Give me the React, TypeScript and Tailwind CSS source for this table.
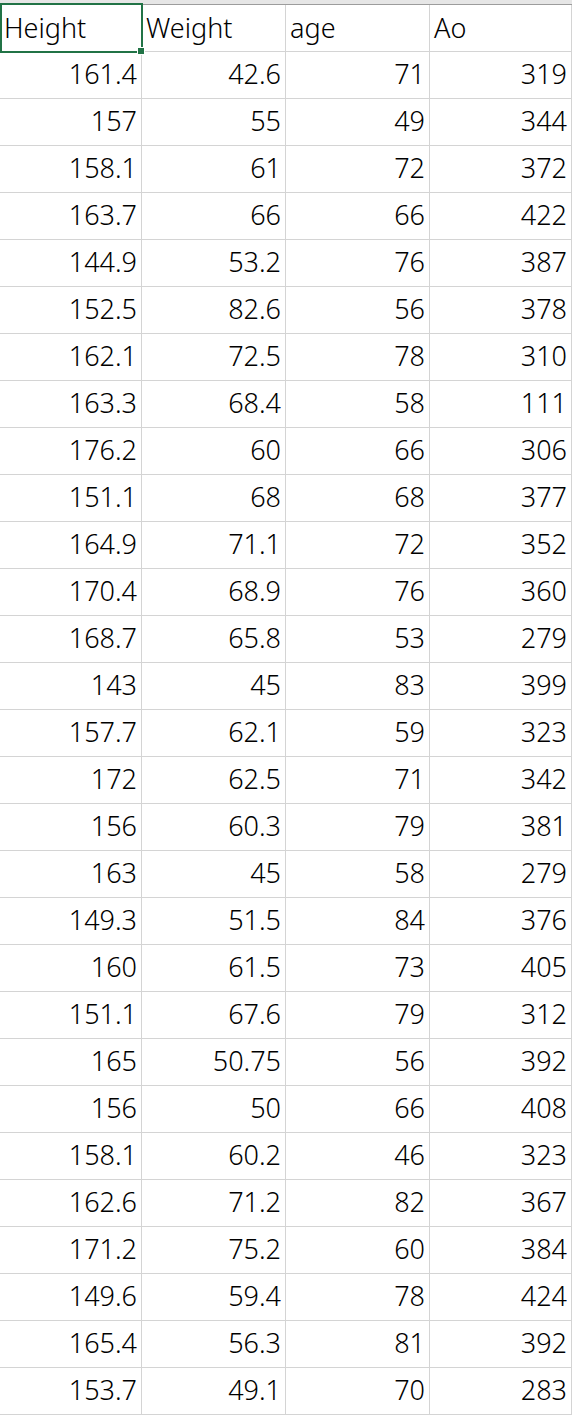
const rows: [string, string, string, string][] = [
  ["161.4", "42.6", "71", "319"],
  ["157", "55", "49", "344"],
  ["158.1", "61", "72", "372"],
  ["163.7", "66", "66", "422"],
  ["144.9", "53.2", "76", "387"],
  ["152.5", "82.6", "56", "378"],
  ["162.1", "72.5", "78", "310"],
  ["163.3", "68.4", "58", "111"],
  ["176.2", "60", "66", "306"],
  ["151.1", "68", "68", "377"],
  ["164.9", "71.1", "72", "352"],
  ["170.4", "68.9", "76", "360"],
  ["168.7", "65.8", "53", "279"],
  ["143", "45", "83", "399"],
  ["157.7", "62.1", "59", "323"],
  ["172", "62.5", "71", "342"],
  ["156", "60.3", "79", "381"],
  ["163", "45", "58", "279"],
  ["149.3", "51.5", "84", "376"],
  ["160", "61.5", "73", "405"],
  ["151.1", "67.6", "79", "312"],
  ["165", "50.75", "56", "392"],
  ["156", "50", "66", "408"],
  ["158.1", "60.2", "46", "323"],
  ["162.6", "71.2", "82", "367"],
  ["171.2", "75.2", "60", "384"],
  ["149.6", "59.4", "78", "424"],
  ["165.4", "56.3", "81", "392"],
  ["153.7", "49.1", "70", "283"],
];

const headers = ["Height", "Weight", "age", "Ao"];

const font = "font-['Noto_Sans','Noto_Sans_CJK_JP',sans-serif]";

export default function App() {
  return (
    <div className={`relative w-[572px] h-[1422px] overflow-hidden bg-white text-black font-light ${font}`}>
      <div className="h-[5px] bg-[#e6e6e6] border-b border-[#9c9c9c]" />
      <div className="grid grid-cols-[142px_144px_144px_142px]">
        {headers.map((h) => (
          <div
            key={h}
            className="h-[47px] border-b border-r border-[#d4d4d4] pl-[4px] pb-[2px] flex items-center text-[27px] leading-none"
          >
            {h}
          </div>
        ))}
        {rows.map((r, i) =>
          r.map((v, j) => (
            <div
              key={i + "-" + j}
              className="h-[47px] border-b border-r border-[#d4d4d4] pr-[4px] pb-[3px] flex items-center justify-end text-[27px] leading-none"
            >
              {v}
            </div>
          ))
        )}
      </div>
      {/* selected cell A1 */}
      <div className="absolute left-0 top-[3px] w-[143px] h-[50px] border-2 border-[#217346]" />
      <div className="absolute left-[137px] top-[47px] w-[8px] h-[8px] bg-[#217346] border border-white" />
    </div>
  );
}
